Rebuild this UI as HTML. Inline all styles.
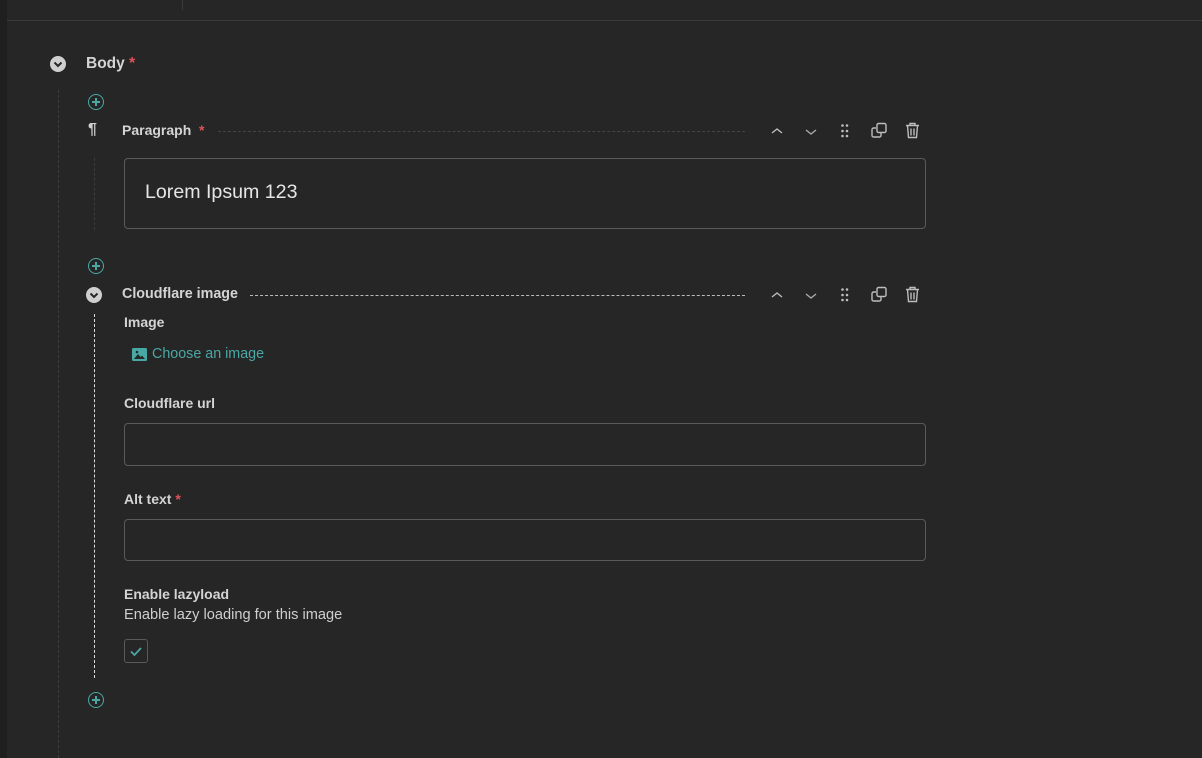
<!DOCTYPE html>
<html><head><style>
body{margin:0;width:1202px;height:758px;background:#262626;position:relative;overflow:hidden;font-family:"Liberation Sans",sans-serif;color:#d8d8d8}
.a{position:absolute}
.b{font-weight:bold;font-size:14px;color:#d4d4d4}
.req{color:#e0525a;font-weight:bold}
.inp{position:absolute;left:124px;width:800px;border:1px solid #5a5a5a;border-radius:4px;background:#262626}
.plus{position:absolute;width:14px;height:14px;border:1.3px solid #4aa8a4;border-radius:50%}
.plus:before{content:"";position:absolute;left:3px;top:6.3px;width:8px;height:1.4px;background:#4aa8a4}
.plus:after{content:"";position:absolute;left:6.3px;top:3px;width:1.4px;height:8px;background:#4aa8a4}
.chev{position:absolute;width:16px;height:16px;border-radius:50%;background:#cfcfcf}
</style></head><body>
<div class="a" style="left:0;top:0;width:7px;height:758px;background:#1f1f1f"></div>
<div class="a" style="left:7px;top:20px;width:1195px;height:1px;background:#3a3a3a"></div>
<div class="a" style="left:182px;top:0;width:1px;height:10px;background:#3a3a3a"></div>
<div class="a" style="left:58px;top:90px;height:668px;border-left:1px dashed #3c3c3c"></div>

<div class="chev" style="left:50px;top:56px"><svg width="16" height="16"><path d="M4.5 6.5L8 10L11.5 6.5" stroke="#262626" stroke-width="2" fill="none"/></svg></div>
<div class="a b" style="left:86px;top:55px;font-size:15.5px">Body <span class="req">*</span></div>

<div class="plus" style="left:88px;top:94px"></div>
<div class="a" style="left:88px;top:121px;font-size:16px;font-weight:bold;color:#cfcfcf">¶</div>
<div class="a b" style="left:122px;top:122px;font-size:14px">Paragraph &nbsp;<span class="req">*</span></div>
<div class="a" style="left:218px;top:131px;width:527px;border-top:1px dashed #444"></div>
<div class="a" style="left:94px;top:158px;height:72px;border-left:1px dashed #3c3c3c"></div>
<div class="inp" style="top:158px;height:69px"></div>
<div class="a" style="left:145px;top:181px;font-size:19.6px;color:#e6e6e6">Lorem Ipsum 123</div>

<div class="plus" style="left:88px;top:258px"></div>
<div class="chev" style="left:86px;top:287px"><svg width="16" height="16"><path d="M4.5 6.5L8 10L11.5 6.5" stroke="#262626" stroke-width="2" fill="none"/></svg></div>
<div class="a b" style="left:122px;top:286px;font-size:14.3px">Cloudflare image</div>
<div class="a" style="left:250px;top:295px;width:495px;border-top:1px dashed #bbb"></div>
<div class="a" style="left:94px;top:314px;height:364px;border-left:1px dashed #ddd"></div>

<svg class="a" style="left:765px;top:120px" width="160" height="200" fill="none" stroke="#bdbdbd" stroke-width="1.4">
<g id="t">
<path d="M7 13L12 9L17 13"/>
<path d="M41 10L46 14L51 10" stroke="#aaa"/>
<g fill="#bdbdbd" stroke="none"><circle cx="77.5" cy="5.5" r="1.3"/><circle cx="82" cy="5.5" r="1.3"/><circle cx="77.5" cy="11" r="1.3"/><circle cx="82" cy="11" r="1.3"/><circle cx="77.5" cy="16" r="1.3"/><circle cx="82" cy="16" r="1.3"/></g>
<rect x="112" y="3.5" width="9" height="9" rx="1.5"/><path d="M111 8h-2.5a1.5 1.5 0 0 0-1.5 1.5v6a1.5 1.5 0 0 0 1.5 1.5h6a1.5 1.5 0 0 0 1.5-1.5V13"/>
<path d="M141 5.5h13M145 5.5V3.5h5v2M142.5 5.5l1 12h8l1-12M146 8.5v7M149 8.5v7"/>
</g>
<use href="#t" y="164"/>
</svg>

<div class="a b" style="left:124px;top:314px;font-size:14px">Image</div>
<svg class="a" style="left:132px;top:348px" width="15" height="14"><rect width="15" height="13" rx="1.5" fill="#4aa8a4"/><path d="M2 11L6 6L8.5 9L10 7.5L13 11Z" fill="#262626"/><circle cx="5" cy="4" r="1.3" fill="#262626"/></svg>
<div class="a" style="left:152px;top:346px;font-size:14.3px;color:#4aa8a4">Choose an image</div>

<div class="a b" style="left:124px;top:395px;font-size:14px">Cloudflare url</div>
<div class="inp" style="top:423px;height:41px"></div>
<div class="a b" style="left:124px;top:491px;font-size:14px">Alt text <span class="req">*</span></div>
<div class="inp" style="top:519px;height:40px"></div>
<div class="a b" style="left:124px;top:586px;font-size:14px">Enable lazyload</div>
<div class="a" style="left:124px;top:607px;font-size:14.6px;color:#cfcfcf">Enable lazy loading for this image</div>
<div class="a" style="left:124px;top:639px;width:22px;height:22px;border:1px solid #5a5a5a;border-radius:3px"><svg width="22" height="22"><path d="M6 11.5L9.5 15L16 8" stroke="#4aa8a4" stroke-width="1.8" fill="none"/></svg></div>

<div class="plus" style="left:88px;top:692px"></div>
</body></html>
